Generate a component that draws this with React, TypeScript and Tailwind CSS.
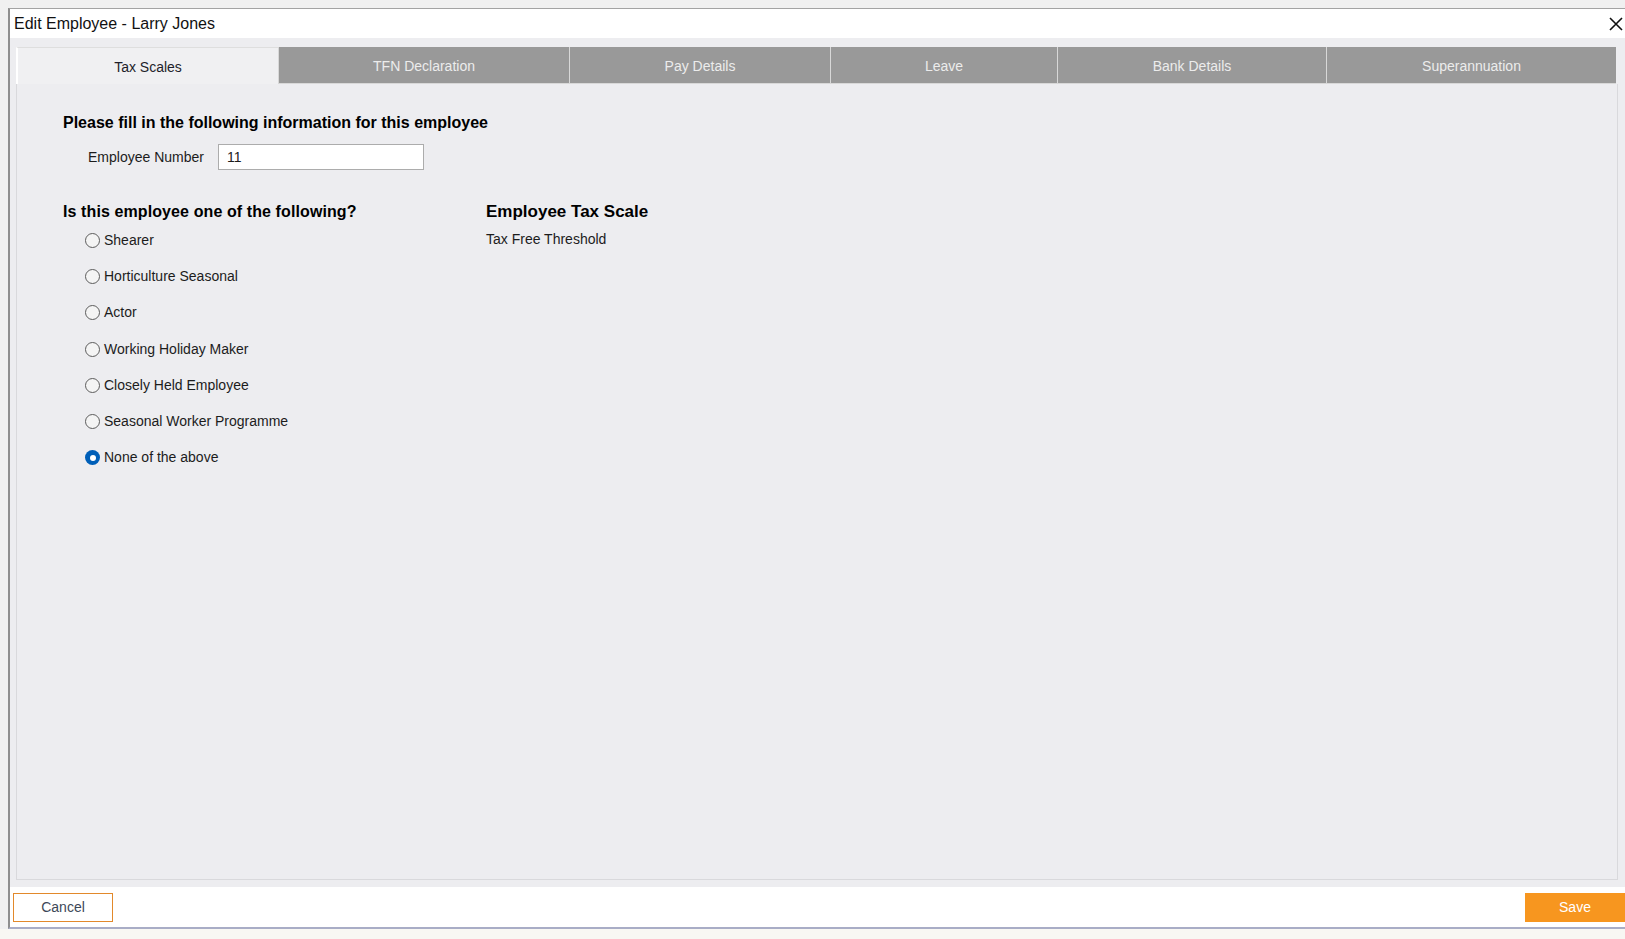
import React from "react";

const TABS = [
  { label: "Tax Scales", w: "w-[262px]" },
  { label: "TFN Declaration", w: "w-[291px]" },
  { label: "Pay Details", w: "w-[261px]" },
  { label: "Leave", w: "w-[227px]" },
  { label: "Bank Details", w: "w-[269px]" },
  { label: "Superannuation", w: "w-[290px]" },
];

const OPTIONS = [
  "Shearer",
  "Horticulture Seasonal",
  "Actor",
  "Working Holiday Maker",
  "Closely Held Employee",
  "Seasonal Worker Programme",
  "None of the above",
];

function Radio({ checked }: { checked?: boolean }) {
  if (checked) {
    return (
      <span className="w-[15px] h-[15px] rounded-full bg-[#005fb8] flex items-center justify-center shrink-0">
        <span className="w-[6px] h-[6px] rounded-full bg-white" />
      </span>
    );
  }
  return <span className="w-[15px] h-[15px] rounded-full border border-[#5c5c5c] bg-[#f4f4f4] shrink-0" />;
}

export default function App() {
  return (
    <div className="w-[1625px] h-[939px] bg-[#f0f0f0] flex flex-col font-['Liberation_Sans',Arial,sans-serif] text-[#1c1c1c] overflow-hidden">
      <div className="h-[929px] pt-[8px] pl-[8px] flex">
        {/* window */}
        <div className="flex-1 flex flex-col border-t border-l-2 border-b-2 border-t-[#a3a3a3] border-l-[#8e8e8e] border-b-[#a9adc6] bg-[#ededf0]">
          {/* title bar */}
          <div className="h-[29px] bg-white flex items-center justify-between pl-[4px] pr-[2px]">
            <span className="text-[16px] text-[#111]">Edit Employee - Larry Jones</span>
            <svg width="14" height="14" viewBox="0 0 14 14" className="mt-[1px]">
              <path d="M1 1L13 13M13 1L1 13" stroke="#111" strokeWidth="1.6" />
            </svg>
          </div>

          {/* body */}
          <div className="flex-1 flex flex-col pt-[9px] pl-[6px]">
            {/* tabs */}
            <div className="h-[37px] w-[1600px] flex">
              {TABS.map((t, i) =>
                i === 0 ? (
                  <div
                    key={t.label}
                    className={`${t.w} h-full pt-[2px] border-l-2 border-l-white border-t border-t-[#dedede] bg-[#f0f0f2] flex items-center justify-center text-[14px] text-[#1e1e2a]`}
                  >
                    {t.label}
                  </div>
                ) : (
                  <div
                    key={t.label}
                    className={`${t.w} h-full pt-[2px] bg-[#999999] border-l border-l-[#d8d8d8] border-b border-b-[#d8d8d8] flex items-center justify-center text-[14px] text-[#ececec]`}
                  >
                    {t.label}
                  </div>
                )
              )}
            </div>

            {/* panel */}
            <div className="h-[796px] w-[1602px] border border-t-0 border-[#d9d9dc] bg-[#ededf0] pl-[46px] pt-[29px]">
              <div className="text-[16px] font-bold leading-[20px] text-black">
                Please fill in the following information for this employee
              </div>
              <div className="flex items-center mt-[11px] pl-[25px] h-[26px]">
                <span className="text-[14px] w-[130px]">Employee Number</span>
                <div className="w-[206px] h-[26px] bg-white border border-[#acacac] flex items-center pl-[8px] text-[14px]">
                  11
                </div>
              </div>

              <div className="flex mt-[32px]">
                <div className="w-[423px]">
                  <div className="text-[16px] font-bold leading-[20px] text-black tracking-[0.1px]">
                    Is this employee one of the following?
                  </div>
                  <div className="flex flex-col pl-[22px]">
                    {OPTIONS.map((o, i) => (
                      <div key={o} className="h-[36.3px] flex items-center gap-[4px] text-[14px]">
                        <Radio checked={i === OPTIONS.length - 1} />
                        <span>{o}</span>
                      </div>
                    ))}
                  </div>
                </div>
                <div>
                  <div className="text-[17px] font-bold leading-[20px] text-black">Employee Tax Scale</div>
                  <div className="text-[14px] mt-[7px]">Tax Free Threshold</div>
                </div>
              </div>
            </div>

            {/* footer */}
            <div className="mt-[7px] -ml-[6px] h-[40px] bg-white flex items-center justify-between pl-[3px]">
              <button className="w-[100px] h-[29px] border border-[#e2892b] bg-white text-[14px] text-[#3d4858]">
                Cancel
              </button>
              <button className="w-[100px] h-[29px] bg-[#f7961f] text-[14px] text-white">Save</button>
            </div>
          </div>
        </div>
      </div>
      <div className="flex-1 bg-[#f8f7f3]" />
    </div>
  );
}
